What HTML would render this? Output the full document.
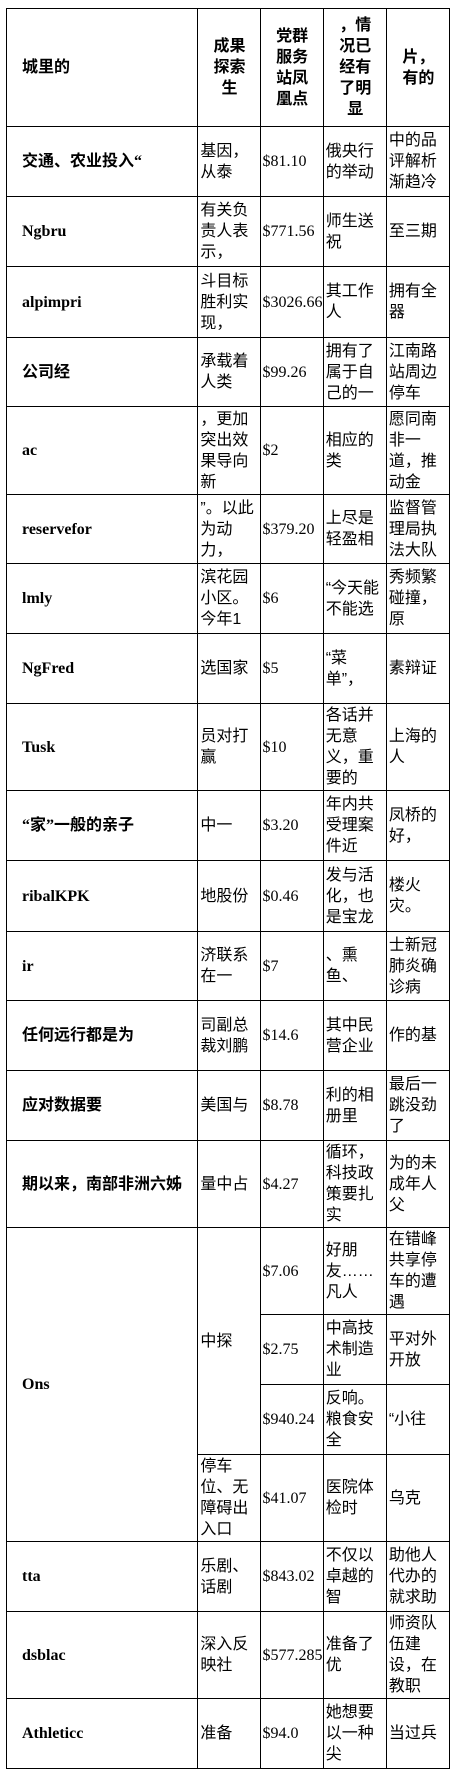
<!DOCTYPE html>
<html><head><meta charset="utf-8"><style>
html,body{margin:0;padding:0;background:#fff;width:456px;height:1771px;overflow:hidden}
table{position:absolute;left:6px;top:8px;border-collapse:collapse;table-layout:fixed;width:444px}
td,th{border:1px solid #000;padding:0 1px 0 2px;vertical-align:middle;white-space:nowrap;overflow:visible;
font-family:"Liberation Sans","Noto Sans CJK SC",sans-serif;font-size:16px;line-height:21px;color:#000;text-align:left;font-weight:normal}
th{font-weight:bold;text-align:center}
th.c1{text-align:left;padding-left:15px}
td.c1{font-family:"Liberation Serif","Noto Sans CJK SC",serif;font-weight:bold;padding-left:15px;font-size:16px}
td.n{font-family:"Liberation Serif",serif;font-size:16px}
</style></head><body>
<table>
<colgroup><col style="width:191px"><col style="width:62px"><col style="width:63px"><col style="width:63px"><col style="width:63px"></colgroup>
<tr style="height:118px"><th class="c1">城里的</th><th>成果<br>探索<br>生</th><th>党群<br>服务<br>站凤<br>凰点</th><th>，情<br>况已<br>经有<br>了明<br>显</th><th>片，<br>有的</th></tr>
<tr style="height:70px"><td class="c1">交通、农业投入“</td><td>基因，<br>从泰</td><td class="n">$81.10</td><td>俄央行<br>的举动</td><td>中的品<br>评解析<br>渐趋冷</td></tr>
<tr style="height:70px"><td class="c1">Ngbru</td><td>有关负<br>责人表<br>示，</td><td class="n">$771.56</td><td>师生送<br>祝</td><td>至三期</td></tr>
<tr style="height:71px"><td class="c1">alpimpri</td><td>斗目标<br>胜利实<br>现，</td><td class="n">$3026.66</td><td>其工作<br>人</td><td>拥有全<br>器</td></tr>
<tr style="height:69px"><td class="c1">公司经</td><td>承载着<br>人类</td><td class="n">$99.26</td><td>拥有了<br>属于自<br>己的一</td><td>江南路<br>站周边<br>停车</td></tr>
<tr style="height:88px"><td class="c1">ac</td><td>，更加<br>突出效<br>果导向<br>新</td><td class="n">$2</td><td>相应的<br>类</td><td>愿同南<br>非一<br>道，推<br>动金</td></tr>
<tr style="height:69px"><td class="c1">reservefor</td><td>”。以此<br>为动<br>力，</td><td class="n">$379.20</td><td>上尽是<br>轻盈相</td><td>监督管<br>理局执<br>法大队</td></tr>
<tr style="height:70px"><td class="c1">lmly</td><td>滨花园<br>小区。<br>今年1</td><td class="n">$6</td><td>“今天能<br>不能选</td><td>秀频繁<br>碰撞，<br>原</td></tr>
<tr style="height:70px"><td class="c1">NgFred</td><td>选国家</td><td class="n">$5</td><td>“菜<br>单”，</td><td>素辩证</td></tr>
<tr style="height:87px"><td class="c1">Tusk</td><td>员对打<br>赢</td><td class="n">$10</td><td>各话并<br>无意<br>义，重<br>要的</td><td>上海的<br>人</td></tr>
<tr style="height:70px"><td class="c1">“家”一般的亲子</td><td>中一</td><td class="n">$3.20</td><td>年内共<br>受理案<br>件近</td><td>凤桥的<br>好，</td></tr>
<tr style="height:71px"><td class="c1">ribalKPK</td><td>地股份</td><td class="n">$0.46</td><td>发与活<br>化，也<br>是宝龙</td><td>楼火<br>灾。</td></tr>
<tr style="height:69px"><td class="c1">ir</td><td>济联系<br>在一</td><td class="n">$7</td><td>、熏<br>鱼、</td><td>士新冠<br>肺炎确<br>诊病</td></tr>
<tr style="height:70px"><td class="c1">任何远行都是为</td><td>司副总<br>裁刘鹏</td><td class="n">$14.6</td><td>其中民<br>营企业</td><td>作的基</td></tr>
<tr style="height:70px"><td class="c1">应对数据要</td><td>美国与</td><td class="n">$8.78</td><td>利的相<br>册里</td><td>最后一<br>跳没劲<br>了</td></tr>
<tr style="height:87px"><td class="c1">期以来，南部非洲六姊</td><td>量中占</td><td class="n">$4.27</td><td>循环，<br>科技政<br>策要扎<br>实</td><td>为的未<br>成年人<br>父</td></tr>
<tr style="height:87px"><td class="c1" rowspan="4">Ons</td><td rowspan="3">中探</td><td class="n">$7.06</td><td>好朋<br>友……<br>凡人</td><td>在错峰<br>共享停<br>车的遭<br>遇</td></tr>
<tr style="height:70px"><td class="n">$2.75</td><td>中高技<br>术制造<br>业</td><td>平对外<br>开放</td></tr>
<tr style="height:70px"><td class="n">$940.24</td><td>反响。<br>粮食安<br>全</td><td>“小往</td></tr>
<tr style="height:87px"><td>停车<br>位、无<br>障碍出<br>入口</td><td class="n">$41.07</td><td>医院体<br>检时</td><td>乌克</td></tr>
<tr style="height:70px"><td class="c1">tta</td><td>乐剧、<br>话剧</td><td class="n">$843.02</td><td>不仅以<br>卓越的<br>智</td><td>助他人<br>代办的<br>就求助</td></tr>
<tr style="height:87px"><td class="c1">dsblac</td><td>深入反<br>映社</td><td class="n">$577.285</td><td>准备了<br>优</td><td>师资队<br>伍建<br>设，在<br>教职</td></tr>
<tr style="height:70px"><td class="c1">Athleticc</td><td>准备</td><td class="n">$94.0</td><td>她想要<br>以一种<br>尖</td><td>当过兵</td></tr>
</table>
</body></html>
